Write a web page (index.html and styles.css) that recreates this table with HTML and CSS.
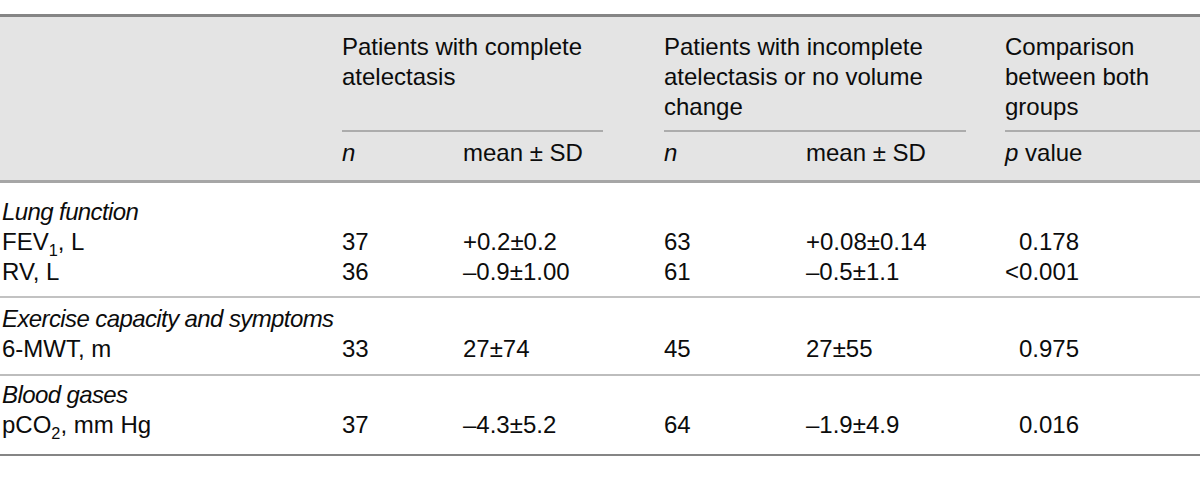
FILE: index.html
```html
<!DOCTYPE html>
<html lang="en">
<head>
<meta charset="utf-8">
<title>Table</title>
<link rel="stylesheet" href="styles.css">
</head>
<body>
<table class="data">
  <colgroup>
    <col class="c-label">
    <col class="c-n1">
    <col class="c-m1">
    <col class="c-g1">
    <col class="c-n2">
    <col class="c-m2">
    <col class="c-g2">
    <col class="c-p">
  </colgroup>
  <thead>
    <tr class="hrow1">
      <th rowspan="2" class="hlabel"></th>
      <th colspan="2" class="grp">Patients with complete<br>atelectasis</th>
      <th class="gap"></th>
      <th colspan="2" class="grp">Patients with incomplete<br>atelectasis or no volume<br>change</th>
      <th class="gap"></th>
      <th class="grp">Comparison<br>between both<br>groups</th>
    </tr>
    <tr class="hrow2">
      <th><i>n</i></th>
      <th>mean ± SD</th>
      <th></th>
      <th><i>n</i></th>
      <th>mean ± SD</th>
      <th></th>
      <th><i>p</i> value</th>
    </tr>
  </thead>
  <tbody class="sec sec1">
    <tr class="title"><td colspan="8"><i>Lung function</i></td></tr>
    <tr><td class="lbl">FEV<sub>1</sub>, L</td><td>37</td><td>+0.2±0.2</td><td></td><td>63</td><td>+0.08±0.14</td><td></td><td><span class="pv">0.178</span></td></tr>
    <tr class="last"><td class="lbl">RV, L</td><td>36</td><td>–0.9±1.00</td><td></td><td>61</td><td>–0.5±1.1</td><td></td><td><span class="pv">&lt;0.001</span></td></tr>
  </tbody>
  <tbody class="sec sec2">
    <tr class="title"><td colspan="8"><i>Exercise capacity and symptoms</i></td></tr>
    <tr class="last"><td class="lbl">6-MWT, m</td><td>33</td><td>27±74</td><td></td><td>45</td><td>27±55</td><td></td><td><span class="pv">0.975</span></td></tr>
  </tbody>
  <tbody class="sec sec3">
    <tr class="title"><td colspan="8"><i>Blood gases</i></td></tr>
    <tr class="last"><td class="lbl">pCO<sub>2</sub>, mm Hg</td><td>37</td><td>–4.3±5.2</td><td></td><td>64</td><td>–1.9±4.9</td><td></td><td><span class="pv">0.016</span></td></tr>
  </tbody>
</table>
</body>
</html>
```
FILE: styles.css
```css
html, body {
  margin: 0;
  padding: 0;
  background: #ffffff;
}

body {
  font-family: "Liberation Sans", Arial, sans-serif;
  font-size: 24px;
  color: #0c0c0c;
}

.data {
  margin-top: 14px;
  width: 1200px;
  table-layout: fixed;
  border-collapse: separate;
  border-spacing: 0;
  border-top: 3px solid #858585;
}

.c-label { width: 342px; }
.c-n1 { width: 121px; }
.c-m1 { width: 140px; }
.c-g1 { width: 61px; }
.c-n2 { width: 142px; }
.c-m2 { width: 160px; }
.c-g2 { width: 39px; }
.c-p { width: 195px; }

.data th,
.data td {
  padding: 0;
  text-align: left;
  vertical-align: top;
  font-weight: normal;
  line-height: 30px;
  white-space: nowrap;
}

.data th {
  background: #e4e4e4;
}

.hrow1 th {
  padding-top: 15px;
  padding-bottom: 8px;
}

.hrow1 th.grp {
  border-bottom: 2px solid #acacac;
}

.hrow1 th.hlabel {
  padding: 0;
  border-bottom: 3px solid #a6a6a6;
}

.hrow2 th {
  padding-top: 6px;
  padding-bottom: 12px;
  border-bottom: 3px solid #a6a6a6;
}

.data td.lbl,
.title td {
  padding-left: 2px;
}

.title i {
  letter-spacing: -0.6px;
}

.sec1 .title td { padding-top: 14px; }
.sec1 .last td { padding-bottom: 9px; border-bottom: 2px solid #c2c2c2; }

.sec2 .title td { padding-top: 6px; }
.sec2 .last td { padding-bottom: 10px; border-bottom: 2px solid #bdbdbd; }

.sec3 .title td { padding-top: 4px; }
.sec3 .last td { padding-bottom: 14px; border-bottom: 2px solid #858585; }

.pv {
  display: inline-block;
  width: 74px;
  text-align: right;
}

sub {
  font-size: 0.68em;
  line-height: 0;
  vertical-align: -0.35em;
}
```
